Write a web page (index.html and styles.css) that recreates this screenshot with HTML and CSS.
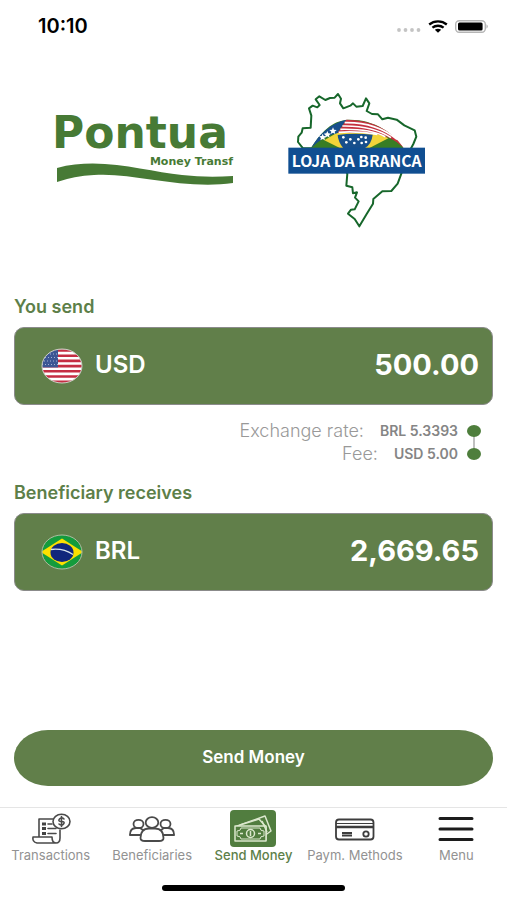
FILE: index.html
```
<!DOCTYPE html>
<html lang="en">

<head>
    <meta charset="UTF-8">
    <meta name="viewport" content="width=device-width, initial-scale=1.0">
    <title>Pontua Money Transf</title>
    <link rel="stylesheet" href="styles.css">
</head>

<body>
    <!-- Status bar -->
    <div class="status-bar">
        <span class="status-time">10:10</span>
        <div class="status-icons">
            <svg class="icon-signal" viewBox="0 0 24 4">
                <g fill="#c4c4c4">
                    <circle cx="2" cy="2" r="1.9"/>
                    <circle cx="8.5" cy="2" r="1.9"/>
                    <circle cx="15" cy="2" r="1.9"/>
                    <circle cx="21.5" cy="2" r="1.9"/>
                </g>
            </svg>
            <svg class="icon-wifi" viewBox="0 0 20 13">
                <path d="M1.2 4.5C6.2 .4 13.8 .4 18.8 4.5M4.4 7.7C7.6 5.1 12.4 5.1 15.6 7.7" fill="none" stroke="#000" stroke-width="2.3"/>
                <path d="M6.8 9.8Q10 7.5 13.2 9.8L10 12.8Z"/>
            </svg>
            <svg class="icon-battery" viewBox="0 0 34 13">
                <rect x=".7" y=".7" width="29.6" height="11.6" rx="3.5" fill="#fff" stroke="#b5b5b5" stroke-width="1.4"/>
                <rect x="3" y="2.6" width="24.6" height="7.8" rx="1.5"/>
                <path d="M31.5 4.3Q34 6.5 31.5 8.7Z" fill="#a8a8a8"/>
            </svg>
        </div>
    </div>

    <!-- Logos -->
    <header class="logos">
        <svg class="logo-pontua" viewBox="0 0 184 100" role="img" aria-label="Pontua Money Transf">
            <text class="logo-name" x="0" y="38">Pontua</text>
            <text class="logo-tagline" x="181" y="55" text-anchor="end">Money Transf</text>
            <path d="M5 58C50 46 95 62 130 65Q155 68 181 66V73C130 80 80 62 42 65Q22 66 5 72Z" fill="#477a35"/>
        </svg>
        <svg class="logo-loja" viewBox="0 0 465 450" role="img" aria-label="Loja da Branca">
            <path class="map-line" d="M69 190L54 171L55 155L65 143L68 130L92 128L94 92L87 70L98 62L112 67L119 60L107 43L118 34L136 45L150 39L164 38L174 27L183 41L180 55L190 70L211 62L219 55L229 65L248 63L258 40L268 55L260 78L276 87L294 88L307 103L324 98L350 104L373 121L404 136L409 155L400 177L384 207L371 238L364 266L353 296L334 318L307 319L280 342L279 356L260 387L238 424L224 402L204 386L213 374L224 373L236 349L225 338L231 322L219 325L217 307L199 302L202 266L186 236L150 215L130 190Z"/>
            <path d="M92 190C130 130 165 104 210 104C285 104 340 145 371 190Z" fill="#387d24"/>
            <path d="M170 144L290 142L325 160L267 190H181L133 166Z" fill="#f2d43a"/>
            <path d="M94 188C119 143 156 114 199 104L173 144Q130 153 94 188Z" fill="#174f8c"/>
            <path d="M199 104Q310 104 371 188Q330 150 275 144H173Z" fill="#c4313e"/>
            <g fill="none" stroke="#fff" stroke-width="5">
                <path d="M194 113Q288 111 351 163M187 123Q278 121 333 158M181 133Q270 131 316 155M176 142Q232 138 292 148"/>
            </g>
            <path d="M173 150Q220 143 278 149Q275 177 254 190H190Q174 170 173 150Z" fill="#174f8c"/>
            <g fill="#fff">
                <path id="star" d="M159 127L162 134L170 135L164 140L166 147L159 143L152 147L154 140L148 135L156 134Z"/>
                <use href="#star" x="-17" y="11"/>
                <use href="#star" x="-31" y="19"/>
                <circle cx="190" cy="157" r="4"/>
                <circle cx="199" cy="172" r="4"/>
                <circle cx="211" cy="163" r="4"/>
                <circle cx="223" cy="174" r="4"/>
                <circle cx="235" cy="163" r="4"/>
                <circle cx="244" cy="156" r="4"/>
                <circle cx="257" cy="158" r="4"/>
                <circle cx="245" cy="174" r="4"/>
                <circle cx="258" cy="171" r="4"/>
            </g>
            <rect x="25" y="188" width="410" height="78" fill="#104e91"/>
            <text class="logo-store" x="230" y="245" text-anchor="middle">LOJA DA BRANCA</text>
        </svg>
    </header>

    <!-- Calculator -->
    <main class="calculator">
        <label class="field-label" for="send-amount">You send</label>
        <div class="amount-card">
            <svg class="flag" viewBox="0 0 42 36" aria-hidden="true">
                <clipPath id="flag-clip"><ellipse cx="21" cy="18" rx="20" ry="17"/></clipPath>
                <g clip-path="url(#flag-clip)">
                    <rect width="42" height="36" fill="#fff"/>
                    <path d="M0 2.5H42M0 7.7H42M0 12.9H42M0 18.1H42M0 23.3H42M0 28.5H42M0 33.7H42" stroke="#c52d43" stroke-width="2.6"/>
                    <rect width="17" height="19.4" fill="#3c5694"/>
                    <path d="M3 6H17M1 9.5H17M3 13H17M1 16.5H17" stroke="#a5b3d2" stroke-width="1" stroke-dasharray="1 2"/>
                </g>
                <ellipse cx="21" cy="18" rx="20" ry="17" fill="none" stroke="#c9cec4"/>
            </svg>
            <span class="currency">USD</span>
            <input class="amount" id="send-amount" type="text" inputmode="decimal" value="500.00">
        </div>

        <dl class="rates">
            <div class="rate-row">
                <dt>Exchange rate:</dt>
                <dd>BRL 5.3393</dd>
            </div>
            <div class="rate-row">
                <dt>Fee:</dt>
                <dd>USD 5.00</dd>
            </div>
        </dl>

        <label class="field-label" for="receive-amount">Beneficiary receives</label>
        <div class="amount-card">
            <svg class="flag" viewBox="0 0 42 36" aria-hidden="true">
                <g clip-path="url(#flag-clip)">
                    <rect width="42" height="36" fill="#149b3c"/>
                    <path d="M0 18L21 4.5L42 18L21 31.5Z" fill="#fce000"/>
                    <ellipse cx="21" cy="18.5" rx="11.5" ry="9.5" fill="#11277c"/>
                    <path d="M10 15.5Q22 14 32 20.5" fill="none" stroke="#d9e5ed" stroke-width="1.3"/>
                </g>
                <ellipse cx="21" cy="18" rx="20" ry="17" fill="none" stroke="#aebda2"/>
            </svg>
            <span class="currency">BRL</span>
            <input class="amount" id="receive-amount" type="text" inputmode="decimal" value="2,669.65">
        </div>

        <button class="btn-send" type="button">Send Money</button>
    </main>

    <!-- Bottom navigation -->
    <nav class="tab-bar">
        <a class="tab" href="#">
            <svg class="tab-icon" viewBox="0 0 46 38">
                <g fill="none" stroke="#4a4a4a" stroke-width="1.6" stroke-linejoin="round" stroke-linecap="round">
                    <path d="M25 9H11V27M32 20V28Q32 33 28 33H9Q4 32 5 27H24Q24 33 28 33"/>
                    <ellipse cx="33.5" cy="11.5" rx="8.5" ry="7.2"/>
                    <path d="M36 9Q33.5 6.5 31.5 9T33.5 11.5T35.5 14T31 14M33.5 6.5V16.5M20 14H24M20 18.5H28M20 23.5H28"/>
                </g>
                <path d="M14 12.5H18V15.5H14ZM14 17H18V20H14ZM14 22H18V25H14Z" fill="#444"/>
            </svg>
            <span>Transactions</span>
        </a>
        <a class="tab" href="#">
            <svg class="tab-icon" viewBox="0 0 46 38">
                <g fill="#fff" stroke="#4a4a4a" stroke-width="1.8" stroke-linejoin="round">
                    <ellipse cx="9.5" cy="14" rx="5" ry="4.2"/>
                    <ellipse cx="36.5" cy="14" rx="5" ry="4.2"/>
                    <path d="M.9 25Q1 18 7 18H11L14 20V25ZM45.1 25Q45 18 39 18H35L32 20V25Z"/>
                    <path d="M11.5 28Q11.5 18.5 20 18.5H26Q34.5 18.5 34.5 28Q34.5 31 30 31H16Q11.5 31 11.5 28Z"/>
                    <ellipse cx="23" cy="12.5" rx="6.3" ry="5.3"/>
                </g>
            </svg>
            <span>Beneficiaries</span>
        </a>
        <a class="tab active" href="#">
            <svg class="tab-icon" viewBox="0 0 46 38">
                <rect width="46" height="37" rx="4" fill="#517d3f"/>
                <g fill="#517d3f" stroke="#dce8ce" stroke-width="1.5" stroke-linejoin="round">
                    <path d="M10 15L35 6L41 21L34 26Z"/>
                    <path d="M7 16L29 9L36 17V30H7Z"/>
                    <rect x="5" y="16" width="31" height="15"/>
                    <path d="M11 18H30Q30 21 34 21V26Q30 26 30 29H11Q11 26 7 26V21Q11 21 11 18Z" stroke-width="1"/>
                    <circle cx="20.5" cy="23.5" r="4"/>
                    <path d="M20.5 21V26M10 23.5H13M28 23.5H31M32 11L37 22" fill="none"/>
                </g>
            </svg>
            <span>Send Money</span>
        </a>
        <a class="tab" href="#">
            <svg class="tab-icon" viewBox="0 0 46 38">
                <g fill="none" stroke="#3d3d3d" stroke-width="1.8">
                    <rect x="4" y="9.5" width="37.5" height="20" rx="3"/>
                    <path d="M4 13.5H41.5" stroke-width="1"/>
                    <path d="M4 17H41.5" stroke-width="2.5"/>
                    <path d="M10 23H20M10 25.5H20"/>
                    <circle cx="34" cy="24" r="2.7"/>
                </g>
            </svg>
            <span>Paym. Methods</span>
        </a>
        <a class="tab" href="#">
            <svg class="tab-icon" viewBox="0 0 46 38">
                <path d="M7 8.5H39M7 19H39M7 29.5H39" fill="none" stroke="#1c1c1c" stroke-width="3" stroke-linecap="round"/>
            </svg>
            <span>Menu</span>
        </a>
    </nav>
    <div class="home-indicator"></div>
</body>

</html>
```
FILE: styles.css
```
* {
    box-sizing: border-box;
}

body {
    display: flex;
    flex-direction: column;
    min-height: 100vh;
    margin: 0;
    background-color: #fff;
    font-family: Inter, sans-serif;
}

/* Status bar */
.status-bar {
    display: flex;
    justify-content: space-between;
    align-items: center;
    height: 52px;
    padding: 0 18px 0 38px;
}

.status-time {
    font-size: 20px;
    font-weight: 600;
}

.status-icons {
    display: flex;
    align-items: center;
    gap: 7px;
}

.icon-signal {
    width: 24px;
    height: 4px;
    margin-top: 8px;
}

.icon-wifi {
    width: 20px;
    height: 13px;
}

.icon-battery {
    width: 34px;
    height: 13px;
}

/* Logos */
.logos {
    display: flex;
    justify-content: center;
    align-items: center;
    gap: 44px;
    padding: 33px 40px 0 20px;
}

.logo-pontua {
    width: 184px;
    height: 100px;
    overflow: visible;
}

.logo-name {
    fill: #477a35;
    font: bold 44px "DejaVu Sans", sans-serif;
}

.logo-tagline {
    fill: #477a35;
    font: bold 11px "DejaVu Sans", sans-serif;
}

.logo-loja {
    width: 155px;
    height: 150px;
}

.map-line {
    fill: #fff;
    stroke: #17672b;
    stroke-width: 6;
    stroke-linejoin: round;
}

.logo-store {
    fill: #fff;
    font: bold 47px "Noto Sans CJK SC", sans-serif;
}

/* Calculator */
.calculator {
    display: flex;
    flex: 1;
    flex-direction: column;
    padding: 60px 14px 21px;
}

.field-label {
    color: #5d7f49;
    font-size: 18px;
    font-weight: 600;
    line-height: 24px;
}

.amount-card {
    display: flex;
    align-items: center;
    height: 78px;
    margin-top: 8px;
    padding: 0 13px 0 26px;
    border: 1px solid #8b8b8b;
    border-radius: 10px;
    background-color: #617f4a;
    color: #fff;
}

.flag {
    flex-shrink: 0;
    width: 42px;
    height: 36px;
}

.currency {
    margin-left: 12px;
    padding-bottom: 4px;
    font-size: 24px;
    font-weight: 600;
}

.amount {
    flex: 1;
    min-width: 0;
    padding: 0 0 4px;
    border: none;
    background: none;
    color: #fff;
    font: 700 29px Inter, sans-serif;
    text-align: right;
}

.rates {
    margin: 14px 12px 16px;
}

.rate-row {
    display: flex;
    position: relative;
    justify-content: flex-end;
    align-items: center;
    padding-right: 23px;
    color: #858585;
    line-height: 23px;
}

.rate-row dt {
    color: #999;
    font-size: 18px;
    font-weight: 300;
}

.rate-row dd {
    margin-left: 16px;
    font-size: 14px;
    font-weight: 600;
}

/* Dots joined by a thin line */
.rate-row::after {
    content: "";
    position: absolute;
    right: 0;
    top: 6px;
    width: 14px;
    height: 12px;
    border-radius: 50%;
    background-color: #4e7e3c;
}

.rate-row:first-child::before {
    content: "";
    position: absolute;
    right: 6px;
    top: 12px;
    width: 2px;
    height: 23px;
    background-color: #c0c0c0;
}

.btn-send {
    height: 56px;
    margin-top: auto;
    padding-bottom: 4px;
    border: none;
    border-radius: 34px / 28px;
    background-color: #617f4a;
    color: #fff;
    font: 600 17px Inter, sans-serif;
    cursor: pointer;
}

/* Bottom navigation */
.tab-bar {
    display: grid;
    grid-template-columns: repeat(5, 1fr);
    padding-top: 2px;
    border-top: 1px solid #e5e5e5;
}

.tab {
    display: flex;
    flex-direction: column;
    align-items: center;
    color: #929292;
    font-size: 13px;
    line-height: 14px;
    text-decoration: none;
    white-space: nowrap;
}

.tab.active {
    color: #5d7f49;
    font-weight: 500;
}

.tab-icon {
    width: 46px;
    height: 38px;
}

.home-indicator {
    width: 36%;
    height: 6px;
    margin: 23px auto 9px;
    border-radius: 3px;
    background-color: #000;
}
```
